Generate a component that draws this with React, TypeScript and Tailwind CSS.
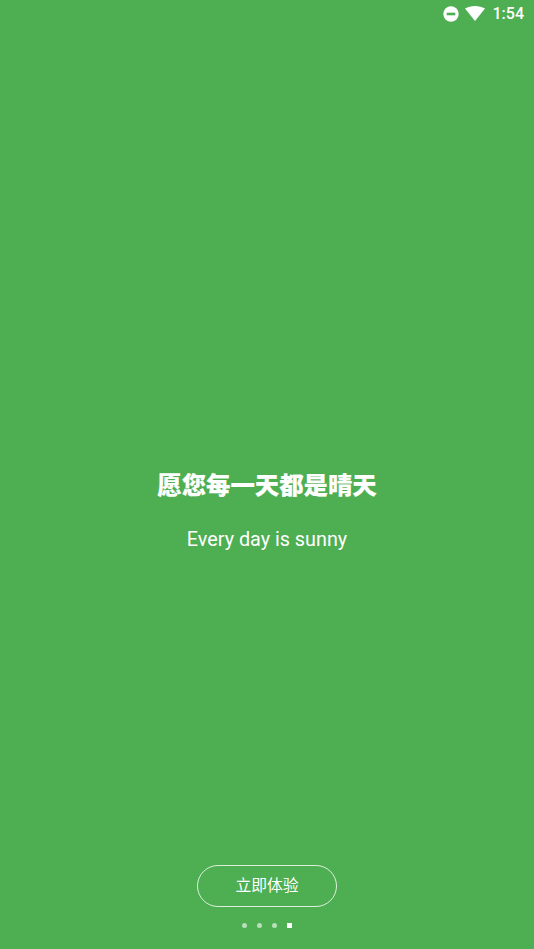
import React from "react";

const font = { fontFamily: '"Roboto", "Noto Sans CJK SC", sans-serif' };

const App: React.FC = () => {
  return (
    <div className="flex h-[949px] w-[534px] flex-col overflow-hidden bg-[#4eae52] text-white" style={font}>
      {/* Status bar */}
      <div className="flex h-[28px] items-center justify-end pr-[10px]">
        <svg width="16" height="16" viewBox="0 0 16 16" className="mr-[6px] mb-[1px]">
          <circle cx="8" cy="8" r="7.7" fill="#fff" />
          <rect x="3.7" y="6.7" width="8.6" height="2.6" fill="#4eae52" />
        </svg>
        <svg width="20" height="15" viewBox="0 0 20 15" className="mr-[8px] mb-[1px]">
          <path d="M0 2.6C2.8.9 6.2 0 10 0s7.2.9 10 2.6L10 15z" fill="#fff" />
        </svg>
        <span className="text-[16px] font-medium leading-none">1:54</span>
      </div>

      {/* Intro text */}
      <div className="mt-[442px] flex flex-col items-center">
        <h1 className="text-[24.4px] font-black leading-[32px] [-webkit-text-stroke:0.15px_white]">愿您每一天都是晴天</h1>
        <p className="mt-[26px] text-[19.8px] leading-[24px]">Every day is sunny</p>
      </div>

      {/* Bottom actions */}
      <div className="mt-auto flex flex-col items-center pb-[21px]">
        <button className="flex h-[42px] w-[140px] items-center justify-center rounded-full border border-white/80 text-[15.8px]">
          立即体验
        </button>
        <div className="mt-[16px] flex items-center gap-[10px] pr-[1px]">
          <span className="h-[5px] w-[5px] rounded-full bg-white/60" />
          <span className="h-[5px] w-[5px] rounded-full bg-white/60" />
          <span className="h-[5px] w-[5px] rounded-full bg-white/60" />
          <span className="h-[5px] w-[5px] bg-white" />
        </div>
      </div>
    </div>
  );
};

export default App;
